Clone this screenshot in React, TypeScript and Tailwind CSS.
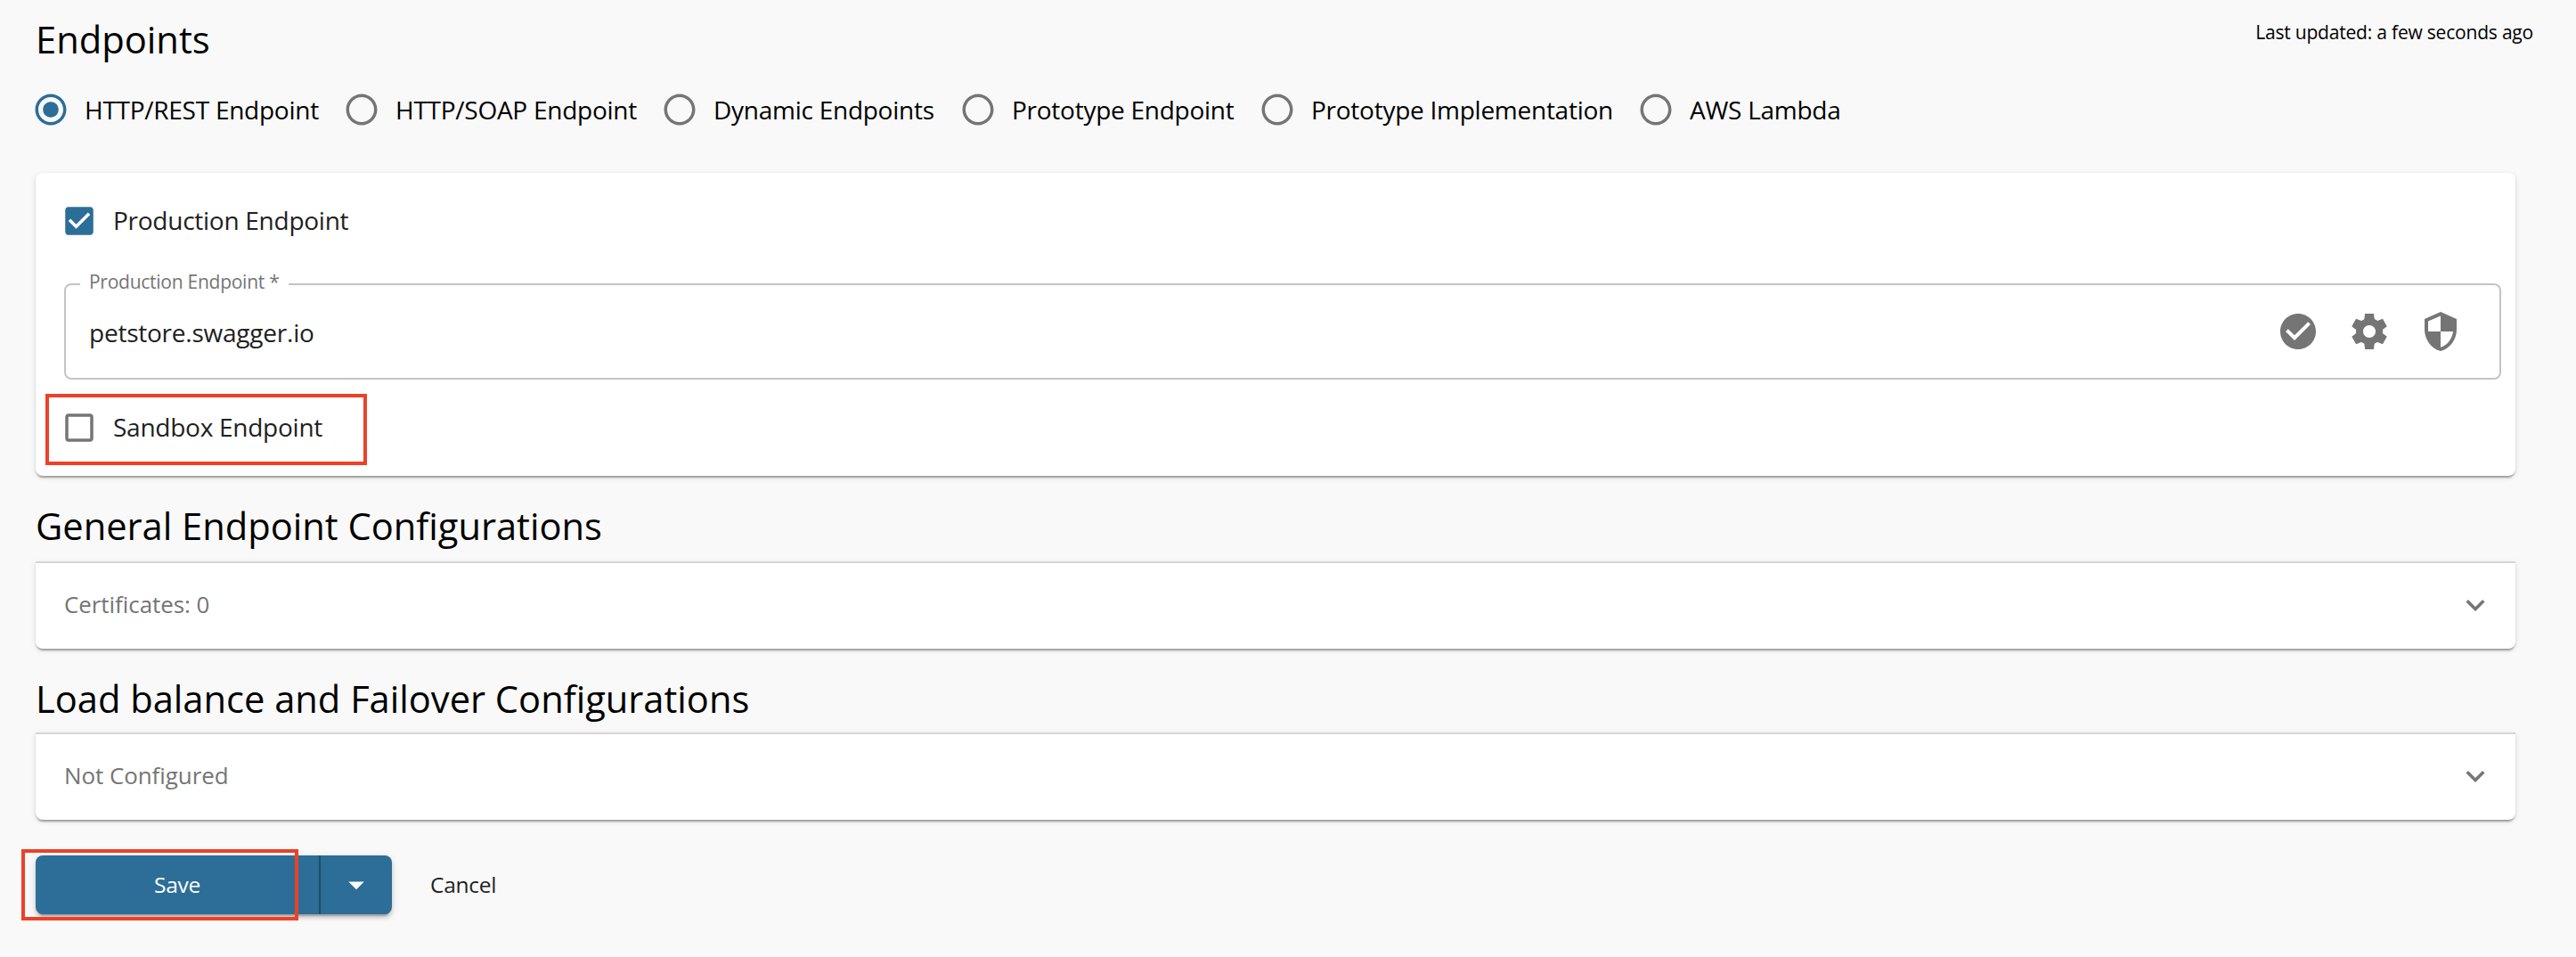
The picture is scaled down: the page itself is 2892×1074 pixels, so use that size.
import React from 'react';

const RADIOS = [
  { label: 'HTTP/REST Endpoint', width: 'w-[349px]', checked: true },
  { label: 'HTTP/SOAP Endpoint', width: 'w-[357px]' },
  { label: 'Dynamic Endpoints', width: 'w-[335px]' },
  { label: 'Prototype Endpoint', width: 'w-[336px]' },
  { label: 'Prototype Implementation', width: 'w-[425px]' },
  { label: 'AWS Lambda', width: 'w-[300px]' },
];

function Icon({ d, className }: { d: string; className: string }) {
  return (
    <svg viewBox="0 0 24 24" fill="currentColor" className={`shrink-0 ${className}`}>
      <path d={d} />
    </svg>
  );
}

const RADIO_OFF = 'M12 2C6.48 2 2 6.48 2 12s4.48 10 10 10 10-4.48 10-10S17.52 2 12 2zm0 18c-4.42 0-8-3.58-8-8s3.58-8 8-8 8 3.58 8 8-3.58 8-8 8z';
const RADIO_DOT = 'M12 7c-2.76 0-5 2.24-5 5s2.24 5 5 5 5-2.24 5-5-2.24-5-5-5z';
const BOX_ON = 'M19 3H5c-1.11 0-2 .9-2 2v14c0 1.1.89 2 2 2h14c1.11 0 2-.9 2-2V5c0-1.1-.89-2-2-2zm-9 14l-5-5 1.41-1.41L10 14.17l7.59-7.59L19 8l-9 9z';
const BOX_OFF = 'M19 5v14H5V5h14m0-2H5c-1.1 0-2 .9-2 2v14c0 1.1.9 2 2 2h14c1.1 0 2-.9 2-2V5c0-1.1-.9-2-2-2z';
const CHECK_CIRCLE = 'M12 2C6.48 2 2 6.48 2 12s4.48 10 10 10 10-4.48 10-10S17.52 2 12 2zm-2 15l-5-5 1.41-1.41L10 14.17l7.59-7.59L19 8l-9 9z';
const GEAR = 'M19.44 12.99l-.01.02c.04-.33.08-.67.08-1.01 0-.34-.03-.66-.07-.99l.01.02 2.44-1.92-2.43-4.22-2.87 1.16.01.01c-.52-.4-1.09-.74-1.71-1h.01L14.44 2H9.57l-.44 3.07h.01c-.62.26-1.19.6-1.71 1l.01-.01-2.88-1.17-2.44 4.22 2.44 1.92.01-.02c-.04.33-.07.65-.07.99 0 .34.03.68.08 1.01l-.01-.02-2.1 1.65-.33.26 2.43 4.2 2.88-1.15-.02-.04c.53.41 1.1.75 1.73 1.01h-.03L9.58 22h4.85s.03-.18.06-.42l.38-2.65h-.01c.62-.26 1.2-.6 1.73-1.01l-.02.04 2.88 1.15 2.43-4.2s-.14-.12-.33-.26l-2.11-1.66zM12 15.5c-1.93 0-3.5-1.57-3.5-3.5s1.57-3.5 3.5-3.5 3.5 1.57 3.5 3.5-1.57 3.5-3.5 3.5z';
const SHIELD = 'M12 1L3 5v6c0 5.55 3.84 10.74 9 12 5.16-1.26 9-6.45 9-12V5l-9-4zm0 10.99h7c-.53 4.12-3.28 7.79-7 8.94V12H5V6.3l7-3.11v8.8z';
const EXPAND = 'M16.59 8.59L12 13.17 7.41 8.59 6 10l6 6 6-6z';
const DROP = 'M7 10l5 5 5-5z';

function Panel({ title, text, gap }: { title: string; text: string; gap: string }) {
  return (
    <section className="mt-[27px] tracking-normal">
      <h2 className={`text-[41.65px] leading-[57px] text-black ${gap}`}>{title}</h2>
      <div className="flex h-[98px] items-center justify-between rounded-b-lg border-t-2 border-[#d6d6d6] bg-white pl-8 pr-6 shadow-[0_4px_2px_-2px_rgba(0,0,0,0.2),0_2px_2px_0_rgba(0,0,0,0.14),0_2px_6px_0_rgba(0,0,0,0.12)]">
        <span className="pb-1 text-[25.9px] leading-[36px] tracking-[-0.03px] text-[#757575] [font-feature-settings:'liga'_1]">{text}</span>
        <Icon d={EXPAND} className="mb-[3px] size-[42px] text-[#757575]" />
      </div>
    </section>
  );
}

export default function App() {
  return (
    <main className="relative h-[1074px] w-[2892px] overflow-hidden bg-[#f9f9f9] pl-10 pr-[68px] font-['Open_Sans',sans-serif] text-[28px] leading-[42px] tracking-[-0.26px] text-black">
      <header className="-mr-5 flex h-[90px] items-start justify-between">
        <h1 className="mt-[15px] text-[41.7px] leading-[57px] tracking-normal">Endpoints</h1>
        <p className="mt-[22px] text-[21px] leading-[28px] tracking-[-0.2px]">Last updated: a few seconds ago</p>
      </header>

      <div className="-ml-1 flex h-[66px] items-center">
        {RADIOS.map((r) => (
          <div key={r.label} className={`flex shrink-0 items-center ${r.width}`}>
            <Icon
              d={r.checked ? RADIO_OFF + RADIO_DOT : RADIO_OFF}
              className={r.checked ? 'size-[42px] text-[#2c6e97]' : 'size-[42px] text-[#757575]'}
            />
            <span className="ml-[17px] whitespace-nowrap">{r.label}</span>
          </div>
        ))}
      </div>

      <section className="mt-[38px] h-[340px] rounded-lg bg-white pl-8 pr-4 text-[#212121] shadow-[0_4px_2px_-2px_rgba(0,0,0,0.2),0_2px_2px_0_rgba(0,0,0,0.14),0_2px_6px_0_rgba(0,0,0,0.12)]">
        <div className="-ml-1 flex h-[108px] items-center">
          <Icon d={BOX_ON} className="size-[42px] text-[#2c6e97]" />
          <span className="ml-[17px] pb-0.5">Production Endpoint</span>
        </div>
        <div className="relative mt-4 flex h-[108px] items-center rounded-lg border-2 border-[#c4c4c4] pl-[26px] pr-[42px]">
          <span className="absolute -top-[18px] left-4 bg-white pl-[10px] pr-[10px] text-[21px] leading-[28px] tracking-[-0.26px] text-[#757575]">
            Production Endpoint *
          </span>
          <span className="grow pt-0.5 tracking-[-0.23px]">petstore.swagger.io</span>
          <div className="flex gap-8 text-[#757575]">
            <Icon d={CHECK_CIRCLE} className="size-12" />
            <Icon d={GEAR} className="size-12" />
            <Icon d={SHIELD} className="size-12" />
          </div>
        </div>
        <div className="-ml-1 flex h-[108px] items-center">
          <Icon d={BOX_OFF} className="size-[42px] text-[#757575]" />
          <span className="ml-[17px] pb-0.5">Sandbox Endpoint</span>
        </div>
      </section>

      <Panel title="General Endpoint Configurations" text="Certificates: 0" gap="mb-3" />
      <Panel title="Load balance and Failover Configurations" text="Not Configured" gap="mb-2.5" />

      <footer className="mt-10 flex h-[66px] items-center text-[24.5px] leading-[33px] tracking-[-0.25px]">
        <div className="flex h-[66px] w-[400px] overflow-hidden rounded-lg bg-[#2c6e97] text-white shadow-[0_6px_2px_-4px_rgba(0,0,0,0.2),0_4px_4px_0_rgba(0,0,0,0.14),0_2px_10px_0_rgba(0,0,0,0.12)]">
          <button className="flex w-80 items-center justify-center border-r-2 border-[#1f4d6a] pb-px">Save</button>
          <button className="flex w-20 items-center justify-center">
            <Icon d={DROP} className="size-[42px]" />
          </button>
        </div>
        <button className="ml-[43px] pb-px text-[#212121]">Cancel</button>
      </footer>

      <div className="absolute left-[51px] top-[442px] h-20 w-[361px] border-4 border-[#ee4026]" />
      <div className="absolute left-6 top-[953px] h-20 w-[311px] border-4 border-[#ee4026]" />
    </main>
  );
}
